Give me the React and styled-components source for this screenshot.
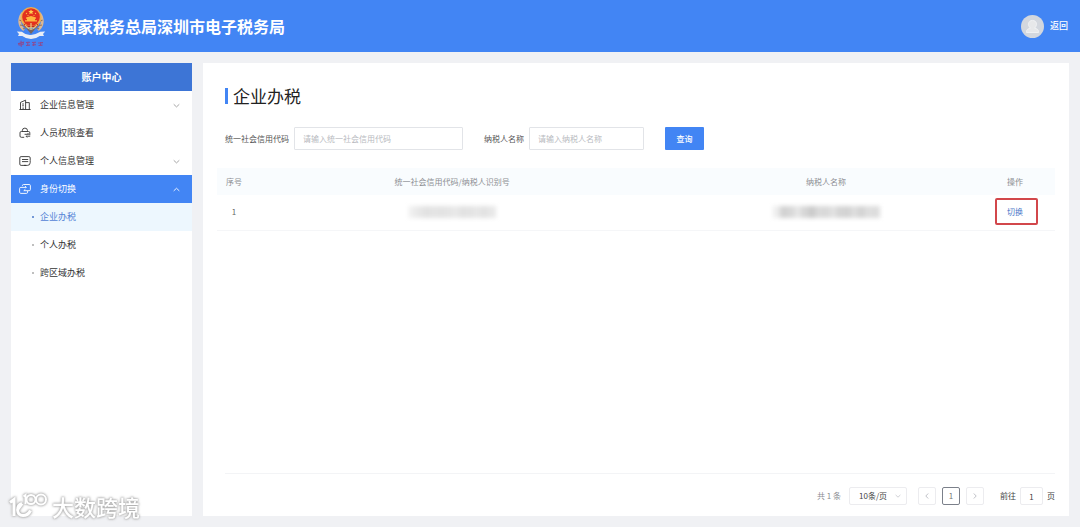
import React from 'react';
import styled, { createGlobalStyle, css } from 'styled-components';

const GlobalStyle = createGlobalStyle`
  * { box-sizing: border-box; }
  body {
    margin: 0;
    background: #f0f1f4;
    color: #444;
    font-family: "Noto Sans CJK SC", "Noto Sans", sans-serif;
    font-size: 8px;
    line-height: 12px;
  }
  button, input, select { font: inherit; color: inherit; margin: 0; }
  a { color: inherit; text-decoration: none; }
  h1, h2, ul { margin: 0; padding: 0; }
  ul { list-style: none; }
`;

const Page = styled.div`
  position: relative;
  display: flex;
  flex-direction: column;
  min-height: 100vh;
`;

const TopBar = styled.header`
  display: flex;
  align-items: center;
  height: 52px;
  padding: 0 12px 0 16px;
  background: #4285f4;
  color: #fff;
`;

const SiteName = styled.h1`
  flex: 1;
  margin-left: 15px;
  font-size: 16px;
  line-height: 24px;
  font-weight: 700;
`;

const BackLink = styled.a`
  display: flex;
  align-items: center;
  gap: 6px;
  font-size: 9px;
  font-weight: 500;
`;

const Body = styled.div`
  flex: 1;
  display: flex;
  gap: 11px;
  padding: 11px;
`;

const Sidebar = styled.nav`
  flex: none;
  width: 181px;
  background: #fff;
`;

const SidebarTitle = styled.h2`
  background: #3d75d6;
  color: #fff;
  font-size: 10px;
  line-height: 28px;
  font-weight: 700;
  text-align: center;
`;

const MenuButton = styled.button`
  display: flex;
  align-items: center;
  gap: 9px;
  width: 100%;
  height: 28px;
  padding: 0 12px 0 8px;
  border: 0;
  background: ${p => (p.$active ? '#4285f4' : 'transparent')};
  color: ${p => (p.$active ? '#fff' : '#333')};
  font-size: 9px;
  text-align: left;
  cursor: pointer;
  span { flex: 1; }
`;

const SubLink = styled.a`
  display: flex;
  align-items: center;
  height: 28px;
  padding-left: 21px;
  gap: 6px;
  font-size: 9px;
  background: ${p => (p.$active ? '#edf7fe' : 'transparent')};
  color: ${p => (p.$active ? '#5484d6' : '#333')};
  &::before {
    content: '';
    width: 2px;
    height: 2px;
    border-radius: 50%;
    background: ${p => (p.$active ? '#4a78c8' : '#aaa')};
  }
`;

const Main = styled.main`
  flex: 1;
  min-width: 0;
  display: flex;
  flex-direction: column;
  padding: 20px 14px 11px;
  background: #fff;
`;

const PageTitle = styled.h2`
  display: flex;
  align-items: center;
  gap: 5px;
  padding-left: 8px;
  color: #222;
  font-size: 17px;
  line-height: 26px;
  font-weight: 400;
  &::before {
    content: '';
    width: 3px;
    height: 16px;
    background: #4285f4;
  }
`;

const Filters = styled.form`
  display: flex;
  align-items: center;
  gap: 21px;
  padding: 18px 8px;
`;

const Field = styled.label`
  display: flex;
  align-items: center;
  gap: 5px;
  color: #555;
`;

const TextInput = styled.input`
  width: ${p => p.$width};
  height: 23px;
  padding: 0 8px;
  border: 1px solid #e2e4e8;
  border-radius: 1px;
  background: #fff;
  outline: none;
  &::placeholder { color: #b8bac0; opacity: 1; }
`;

const QueryButton = styled.button`
  width: 39px;
  height: 23px;
  padding: 0;
  border: 0;
  border-radius: 1px;
  background: #4285f4;
  color: #fff;
  font-weight: 500;
  cursor: pointer;
`;

const Table = styled.table`
  width: 100%;
  border-collapse: collapse;
  table-layout: fixed;
`;

const cell = css`
  padding: 0 8px;
  text-align: ${p => (p.$start ? 'left' : 'center')};
  width: ${p => p.$width || 'auto'};
`;

const HeadCell = styled.th`
  ${cell}
  height: 27px;
  background: #f9fcfe;
  color: #8c8e93;
  font-weight: 400;
`;

const Cell = styled.td`
  ${cell}
  height: 35px;
  border-bottom: 1px solid #f5f6f8;
  color: #666;
  svg { display: block; margin: 0 auto; }
`;

const SwitchLink = styled.a`
  position: relative;
  color: #4a78c8;
  &::after {
    content: '';
    position: absolute;
    inset: -8px -15px -8px -12px;
    border: 2px solid #d2474b;
    border-radius: 2px;
  }
`;

const Pager = styled.footer`
  display: flex;
  align-items: center;
  justify-content: flex-end;
  margin-top: auto;
  margin-left: 8px;
  padding-top: 13px;
  border-top: 1px solid #f3f4f6;
  color: #444;
`;

const Total = styled.span`
  margin-right: 8px;
  color: #8c8e93;
`;

const SizePicker = styled.span`
  display: flex;
  align-items: center;
  width: 58px;
  margin-right: 11px;
  padding-right: 5px;
  border: 1px solid #ececef;
  border-radius: 2px;
  select {
    flex: 1;
    min-width: 0;
    height: 16px;
    padding: 0 0 0 9px;
    border: 0;
    background: transparent;
    appearance: none;
    outline: none;
  }
`;

const PageButton = styled.button`
  display: flex;
  align-items: center;
  justify-content: center;
  width: 18px;
  height: 18px;
  margin-right: 6px;
  padding: 0;
  border: 1px solid ${p => (p.$current ? '#7b808a' : '#ececef')};
  border-radius: 2px;
  background: #fff;
  color: ${p => (p.$current ? '#777' : '#c0c2c8')};
`;

const Jump = styled.label`
  display: flex;
  align-items: center;
  gap: 4px;
  margin-left: 10px;
  input {
    width: 23px;
    height: 18px;
    padding: 0;
    border: 1px solid #ececef;
    border-radius: 2px;
    text-align: center;
    outline: none;
  }
`;

const Watermark = styled.div`
  position: absolute;
  left: 8px;
  bottom: 6px;
  display: flex;
  align-items: center;
  gap: 4px;
  color: #fff;
  font-size: 22px;
  line-height: 30px;
  font-weight: 500;
  filter: drop-shadow(0 0 1px #aaa) drop-shadow(0 0 1px #bbb);
  pointer-events: none;
`;

const Chevron = ({ up, color = '#999', size = 7 }) => (
  <svg width={size} height={size} viewBox="0 0 8 8" fill="none" stroke={color} aria-hidden="true">
    <path d={up ? 'M.8 5.6 4 2.6l3.2 3' : 'M.8 2.6 4 5.6l3.2-3'} />
  </svg>
);

const Arrow = ({ left }) => (
  <svg width="6" height="8" viewBox="0 0 6 8" fill="none" stroke="currentColor" aria-hidden="true">
    <path d={left ? 'M4.2 1.5 1.8 4l2.4 2.5' : 'M1.8 1.5 4.2 4 1.8 6.5'} />
  </svg>
);

const icons = {
  company: <path d="M.4 10.5h11.2M1.5 10.5V3.4L6.6 1.2v9.3M6.6 3.6h3.7v6.9M3.2 5h1.7M3.2 6.8h1.7M4.1 10.4V8.4" />,
  access: <path d="M5.2 10.3H2.3A1.3 1.3 0 0 1 1 9V5.8a1.3 1.3 0 0 1 1.300-1.300h7.200a1.300 1.300 0 0 1 1.300 1.300v2.400M3.300 4.400v-.7a2.600 2.600 0 0 1 5.200 0v.7M5.600 7.300h4.200L8.600 6.100M11.200 9.200H7l1.200 1.300" />,
  person: <path d="M11.200 5.500V2.900a1.300 1.300 0 0 0-1.300-1.300H2.100A1.300 1.300 0 0 0 .8 2.900v6.200a1.300 1.300 0 0 0 1.300 1.300h6.300a2.800 2.800 0 0 0 2.800-2.800V5.500M3 4.500h6.200M3 6.600h6.200M5 10.400h2" />,
  swap: <path d="M3.400 3.100v-.4a1.200 1.200 0 0 1 1.200-1.200h5.600a1.200 1.200 0 0 1 1.200 1.200v3.800a1.200 1.200 0 0 1-1.200 1.200H4.800l1.600-1.500M8.600 8v1.200a1.200 1.200 0 0 1-1.200 1.200H1.800A1.200 1.200 0 0 1 .6 9.200V5.600a1.200 1.200 0 0 1 1.200-1.200h5.600L5.900 3" />,
};

const MenuIcon = ({ name }) => (
  <svg width="12" height="12" viewBox="0 0 12 12" fill="none" stroke="currentColor" strokeWidth=".9" strokeLinejoin="round" aria-hidden="true">
    {icons[name]}
  </svg>
);

const Emblem = () => (
  <svg width="30" height="42" viewBox="0 0 30 42" role="img" aria-label="中国税务">
    <g fill="none" stroke="#dcb894" strokeWidth="2.6">
      <path d="M6.5 8C2 14 3 21 8 25M23.5 8c4.5 6 3.5 13-1.5 17" />
    </g>
    <g fill="none" stroke="#8d7464" strokeWidth="1.2">
      <path d="M3.5 15l4 2M4 20l5 1M26.5 15l-4 2M26 20l-5 1M7 24l4-2M23 24l-4-2" />
    </g>
    <circle cx="15" cy="12.5" r="10.5" fill="#efae4f" />
    <circle cx="15" cy="12" r="8.8" fill="#e3301f" />
    <path d="M15 4.2l.8 1.7 1.9.2-1.4 1.2.4 1.9-1.7-1-1.7 1 .4-1.9-1.4-1.2 1.9-.2z" fill="#ffcf50" />
    <g fill="#ffb640">
      <circle cx="10.5" cy="8.5" r=".7" /><circle cx="19.5" cy="8.5" r=".7" />
      <circle cx="12" cy="10.5" r=".6" /><circle cx="18" cy="10.5" r=".6" />
      <path d="M10 12.5l5-1.5 5 1.5v1.2h-1v1.5h2v1.3H9v-1.3h2v-1.5h-1z" />
    </g>
    <path d="M7.5 18.5q7.5 5 15 0l-1.5 3.5H9z" fill="#c3281d" />
    <path d="M9 20l6 6 6-6M15 18v10" fill="none" stroke="#e9c37c" strokeWidth="1.3" />
    <path d="M10 23l5 6 5-6-5 2z" fill="#746563" />
    <path d="M.8 26.5l5 .3q4.2 3.7 9.2 3.2t9.2-3.2l5-.3-2.2 2.4 1 2-4.3.1Q20 34 15 34t-8.7-3l-4.3-.1 1-2z" fill="#e9edf6" />
    <g fill="none" stroke="#8b4b92" strokeWidth="1.1">
      <path d="M2.5 38.5l5-1.3-.5 2.3-4 .5zM5 35.8l.3 6M10 37.5l4-.3M12 36.8l-.5 4M10 40.5l4-.4M16 37.5l4-.3M18 37l-.5 4M16 40l4-.2M22 38l5-.4M24.5 37v4M22.5 40.5l4-.4" />
    </g>
  </svg>
);

const Avatar = () => (
  <svg width="23" height="23" viewBox="0 0 23 23" aria-hidden="true">
    <circle cx="11.5" cy="11.5" r="11.5" fill="#d3d7de" />
    <path d="M5.5 17.5v-1c0-2 1.800-3 4-3.300-3.500-3-2.300-7.800 2-7.800s5.500 4.800 2 7.800c2.200.3 4 1.300 4 3.300v1z" fill="#e7e8ea" stroke="#f4f5f6" strokeWidth=".8" />
  </svg>
);

/* Hidden value, drawn as a strip of soft grey blocks */
const MaskStrip = styled.svg`
  overflow: visible;
  filter: blur(2px);
`;

const Masked = ({ width, shades }) => {
  const step = (width - 8) / shades.length;
  return (
    <MaskStrip width={width} height="16" role="img" aria-label="已隐藏">
      {shades.map((shade, i) => (
        <rect key={i} x={4 + i * step} y="2" width={step + 1} height="12" fill={shade} />
      ))}
    </MaskStrip>
  );
};

const Mark = () => (
  <svg width="40" height="30" viewBox="0 0 40 30" fill="none" stroke="#fff" strokeWidth="3" aria-hidden="true">
    <path d="M2 11.5 6 8.5V25M14 12.5l-4 5.5M14 12.5c-6 2-6 12 1 12 3.5 0 6-1.8 7.5-5" />
    <path d="M15.500 5.500 17.500 4v9" strokeWidth="2" />
    <circle cx="23" cy="8.5" r="4.500" strokeWidth="2" />
    <circle cx="33" cy="8.5" r="5" strokeWidth="2" />
  </svg>
);

const menu = [
  { icon: 'company', label: '企业信息管理', expandable: true },
  { icon: 'access', label: '人员权限查看' },
  { icon: 'person', label: '个人信息管理', expandable: true },
  { icon: 'swap', label: '身份切换', expandable: true, active: true, children: ['企业办税', '个人办税', '跨区域办税'] },
];

const codeShades = ['#eeeeee', '#e7e7e7', '#e2e2e2', '#e4e4e4', '#e3e3e3', '#e5e5e5', '#e9e9e9', '#e2e2e2', '#e3e3e3', '#e7e7e7', '#e2e2e2', '#e8e8e8'];
const nameShades = ['#ededed', '#d2d2d2', '#d8d8d8', '#e5e5e5', '#d6d6d6', '#cbcbcb', '#dadada', '#d9d9d9', '#e1e1e1', '#d5d5d5', '#d3d3d3', '#dddddd', '#d4d4d4', '#dedede', '#dddddd'];

export default function App() {
  return (
    <Page>
      <GlobalStyle />
      <TopBar>
        <Emblem />
        <SiteName>国家税务总局深圳市电子税务局</SiteName>
        <BackLink href="#back"><Avatar />返回</BackLink>
      </TopBar>
      <Body>
        <Sidebar>
          <SidebarTitle>账户中心</SidebarTitle>
          <ul>
            {menu.map(item => (
              <li key={item.label}>
                <MenuButton type="button" $active={item.active}>
                  <MenuIcon name={item.icon} />
                  <span>{item.label}</span>
                  {item.expandable && <Chevron up={item.active} color={item.active ? '#fff' : '#999'} />}
                </MenuButton>
                {item.children && (
                  <ul>
                    {item.children.map((child, i) => (
                      <li key={child}><SubLink href="#menu" $active={i === 0}>{child}</SubLink></li>
                    ))}
                  </ul>
                )}
              </li>
            ))}
          </ul>
        </Sidebar>
        <Main>
          <PageTitle>企业办税</PageTitle>
          <Filters onSubmit={e => e.preventDefault()}>
            <Field>统一社会信用代码<TextInput $width="169px" placeholder="请输入统一社会信用代码" /></Field>
            <Field>纳税人名称<TextInput $width="115px" placeholder="请输入纳税人名称" /></Field>
            <QueryButton type="submit">查询</QueryButton>
          </Filters>
          <Table>
            <thead>
              <tr>
                <HeadCell $width="34px">序号</HeadCell>
                <HeadCell $width="48%">统一社会信用代码/纳税人识别号</HeadCell>
                <HeadCell>纳税人名称</HeadCell>
                <HeadCell $width="56px" $start>操作</HeadCell>
              </tr>
            </thead>
            <tbody>
              <tr>
                <Cell>1</Cell>
                <Cell><Masked width={94} shades={codeShades} /></Cell>
                <Cell><Masked width={114} shades={nameShades} /></Cell>
                <Cell $start><SwitchLink href="#switch">切换</SwitchLink></Cell>
              </tr>
            </tbody>
          </Table>
          <Pager>
            <Total>共 1 条</Total>
            <SizePicker>
              <select aria-label="每页条数" defaultValue="10"><option value="10">10条/页</option></select>
              <Chevron size={6} color="#c0c2c8" />
            </SizePicker>
            <PageButton type="button" aria-label="上一页"><Arrow left /></PageButton>
            <PageButton type="button" $current>1</PageButton>
            <PageButton type="button" aria-label="下一页"><Arrow /></PageButton>
            <Jump>前往<input defaultValue="1" />页</Jump>
          </Pager>
        </Main>
      </Body>
      <Watermark><Mark />大数跨境</Watermark>
    </Page>
  );
}
